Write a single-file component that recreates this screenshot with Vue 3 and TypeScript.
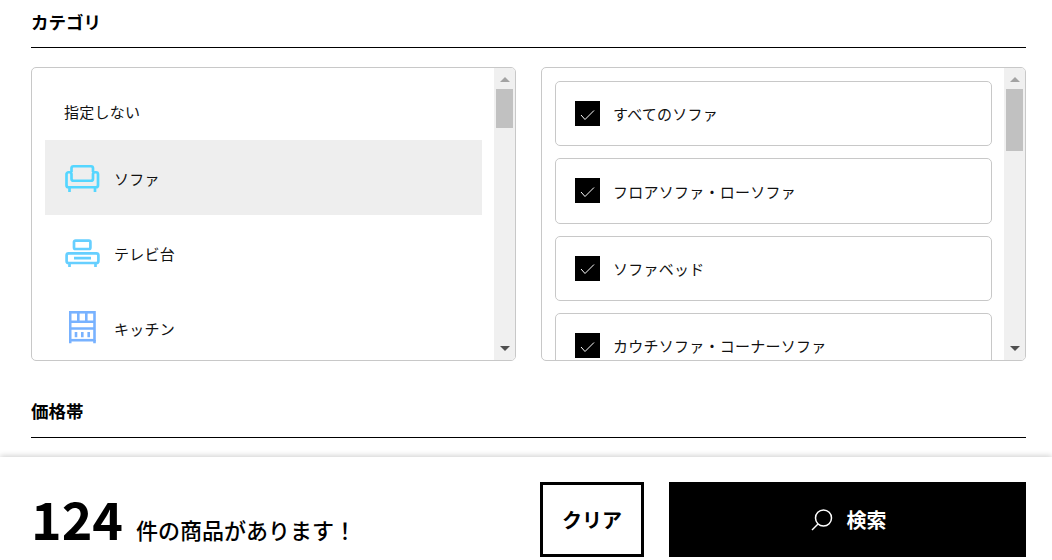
<script setup lang="ts">
const categories = [
  { label: '指定しない', icon: '' },
  { label: 'ソファ', icon: 'sofa', active: true },
  { label: 'テレビ台', icon: 'tv' },
  { label: 'キッチン', icon: 'kitchen' },
]

const subCategories = ['すべてのソファ', 'フロアソファ・ローソファ', 'ソファベッド', 'カウチソファ・コーナーソファ']
</script>

<template>
  <div class="page">
    <main class="content">
      <h2 class="section-title">カテゴリ</h2>
      <div class="panels">
        <div class="panel">
          <ul class="list category-list">
            <li
              v-for="item in categories"
              :key="item.label"
              class="category"
              :class="{ active: item.active, plain: !item.icon }"
            >
              <svg v-if="item.icon === 'sofa'" class="icon" width="36" height="28" viewBox="0 0 36 28" fill="none" stroke="#55d6ff" stroke-width="2.700">
                <path d="M6.500 8V4.250a2 2 0 0 1 2-2h17.500a2 2 0 0 1 2 2V8" />
                <path d="M1.500 10.250a2 2 0 0 1 2-2h1a2 2 0 0 1 2 2v4.500a2 2 0 0 0 2 2h17.500a2 2 0 0 0 2-2v-4.500a2 2 0 0 1 2-2h1a2 2 0 0 1 2 2v11a2 2 0 0 1-2 2H3.500a2 2 0 0 1-2-2z" />
                <path d="M4.500 23.500v4.500M30 23.500v4.500" />
              </svg>
              <svg v-else-if="item.icon === 'tv'" class="icon" width="36" height="28" viewBox="0 0 36 28" fill="none" stroke="#66cfff" stroke-width="2.700">
                <rect x="9" y="1.600" width="16.400" height="8.400" rx="1.500" />
                <rect x="1.600" y="14.300" width="31.800" height="9.700" rx="2" />
                <path d="M9 19.200h17M4.500 24v4M30.500 24v4" />
              </svg>
              <svg v-else-if="item.icon === 'kitchen'" class="icon" width="28" height="33" viewBox="0 0 28 33" fill="none" stroke="#78b2ff" stroke-width="2.600">
                <rect x="1.200" y="1.300" width="24.300" height="27.900" />
                <path d="M1.200 10.800h24.300M1.200 17.500h24.300M9.300 1.300v9.500M17.300 1.300v9.500M1.200 29v3.300M25.500 29v3.300" />
                <path d="M7 21v5.300M13.300 21v5.300M19.700 21v5.300" />
              </svg>
              <span class="label">{{ item.label }}</span>
            </li>
          </ul>
          <div class="scrollbar">
            <span class="arrow up"></span>
            <span class="thumb short"></span>
            <span class="arrow down"></span>
          </div>
        </div>
        <div class="panel">
          <ul class="list check-list">
            <li v-for="item in subCategories" :key="item" class="check-item">
              <span class="checkbox">
                <svg width="15" height="12" viewBox="0 0 15 12" fill="none" stroke="#fff" stroke-width="1">
                  <path d="M1 7l4 4.500L14 2.500" />
                </svg>
              </span>
              <span class="label">{{ item }}</span>
            </li>
          </ul>
          <div class="scrollbar">
            <span class="arrow up"></span>
            <span class="thumb long"></span>
            <span class="arrow down"></span>
          </div>
        </div>
      </div>
      <h2 class="section-title price">価格帯</h2>
    </main>

    <footer class="footer">
      <p class="result">
        <strong class="count">124</strong>
        <span class="result-text">件の商品があります！</span>
      </p>
      <div class="actions">
        <button class="btn clear" type="button">クリア</button>
        <button class="btn search" type="button">
          <svg width="24" height="24" viewBox="0 0 24 24" fill="none" stroke="#fff" stroke-width="1.500">
            <circle cx="13.500" cy="10" r="8" />
            <path d="M8 16l-6 6" />
          </svg>
          <span>検索</span>
        </button>
      </div>
    </footer>
  </div>
</template>

<style>
html,
body {
  margin: 0;
  background: #fff;
}
</style>

<style scoped>
.page {
  display: flex;
  flex-direction: column;
  height: 560px;
  overflow: hidden;
  font-family: "Noto Sans CJK JP", "Noto Sans", sans-serif;
  color: #000;
}

.content {
  flex: 1;
  min-height: 0;
  padding: 0 26px 0 31px;
}

.section-title {
  margin: 0;
  height: 48px;
  padding-top: 9px;
  box-sizing: border-box;
  border-bottom: 1px solid #000;
  font-size: 17.500px;
  line-height: 26px;
  font-weight: 700;
}

.section-title.price {
  margin-top: 27px;
  height: 50px;
  padding-top: 10px;
}

.panels {
  display: grid;
  grid-template-columns: 485px 485px;
  gap: 25px;
  margin-top: 19px;
}

.panel {
  display: flex;
  height: 294px;
  box-sizing: border-box;
  border: 1px solid #c8c8c8;
  border-radius: 5px;
  overflow: hidden;
}

.list {
  flex: 1;
  min-width: 0;
  margin: 0;
  list-style: none;
  overflow: hidden;
}

.category-list {
  padding: 16px 12px 0 13px;
}

.category {
  display: flex;
  align-items: center;
  height: 75px;
  padding-left: 20px;
}

.category.plain {
  height: 56px;
}

.category.active {
  background: #eee;
}

.category .label {
  padding-top: 2px;
}

.category.plain .label {
  margin-left: -1px;
  padding-top: 0;
}

.icon {
  flex: none;
  margin-right: 13px;
}

.icon[width="28"] {
  margin-left: 4px;
  margin-right: 17px;
}

.label {
  font-size: 15px;
  line-height: 22px;
  letter-spacing: 0.250px;
  color: #111;
}

.check-list {
  padding: 13px 12px 0 13px;
}

.check-item {
  display: flex;
  align-items: center;
  flex: none;
  height: 65.300px;
  box-sizing: border-box;
  margin-bottom: 12px;
  padding-left: 19px;
  border: 1px solid #c8c8c8;
  border-radius: 5px;
}

.check-item .label {
  padding-top: 1.500px;
}

.checkbox {
  display: flex;
  align-items: center;
  justify-content: center;
  flex: none;
  width: 25px;
  height: 25px;
  margin-right: 13px;
  background: #000;
}

.scrollbar {
  display: flex;
  flex-direction: column;
  align-items: center;
  flex: none;
  width: 21px;
  height: 100%;
  background: #f0f0f0;
}

.thumb {
  width: 17px;
  background: #c1c1c1;
}

.thumb.short {
  height: 39px;
}

.thumb.long {
  height: 62px;
}

.arrow {
  width: 0;
  height: 0;
  border-left: 5px solid transparent;
  border-right: 5px solid transparent;
}

.arrow.up {
  margin-top: 9px;
  margin-bottom: 7px;
  border-bottom: 5px solid #a3a3a3;
}

.arrow.down {
  margin-top: auto;
  margin-bottom: 9px;
  border-top: 5px solid #505050;
}

.footer {
  display: flex;
  align-items: flex-start;
  justify-content: space-between;
  flex: none;
  height: 103px;
  box-sizing: border-box;
  padding: 25px 26px 0 31px;
  background: #fff;
  box-shadow: 0 -1px 6px rgba(0, 0, 0, 0.2);
}

.result {
  display: flex;
  align-items: flex-end;
  gap: 13px;
  margin: -2px 0 0;
}

.count {
  font-size: 52px;
  line-height: 76px;
  font-weight: 700;
}

.result-text {
  margin-bottom: 12px;
  font-size: 22px;
  line-height: 30px;
  font-weight: 500;
}

.actions {
  display: flex;
  gap: 25px;
}

.btn {
  display: flex;
  align-items: center;
  justify-content: center;
  height: 75px;
  box-sizing: border-box;
  font-family: inherit;
  font-size: 20px;
  font-weight: 700;
  cursor: pointer;
}

.clear {
  width: 104px;
  border: 3px solid #000;
  background: #fff;
  color: #000;
}

.search {
  gap: 13px;
  width: 357px;
  padding-left: 7px;
  border: none;
  background: #000;
  color: #fff;
}
</style>
